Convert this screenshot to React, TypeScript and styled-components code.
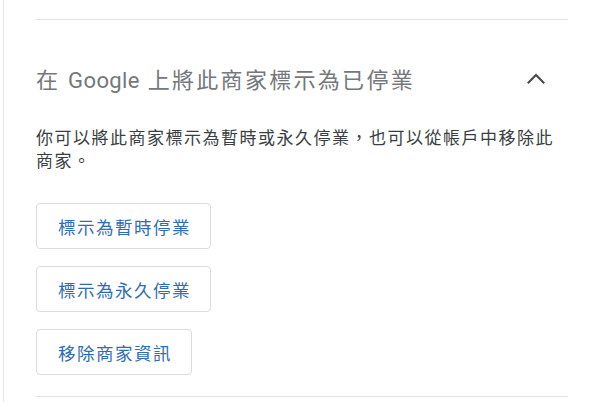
import React from 'react';
import styled, { createGlobalStyle } from 'styled-components';

// **** Style Section **** //

const GlobalStyle = createGlobalStyle`
  html, body {
    margin: 0;
    padding: 0;
    background: #ffffff;
  }
  body {
    font-family: Roboto, "Noto Sans CJK TC", "Noto Sans", sans-serif;
  }
`;

const Page = styled.div`
  min-height: 402px;
  margin-left: 3px;
  border-left: 1px solid #e6e6e6;
  padding: 19px 32px 0 32px;
  box-sizing: border-box;
`;

const Section = styled.section`
  border-top: 1px solid #e3e3e3;
  border-bottom: 1px solid #e3e3e3;
  padding-bottom: 21px;
`;

const Header = styled.div`
  display: flex;
  align-items: center;
  justify-content: space-between;
  height: 36px;
  margin-top: 40px;
`;

const Title = styled.h2`
  margin: 0;
  font-weight: 400;
  font-size: 22px;
  letter-spacing: 2.3px;
  color: #74777b;
  font-family: Roboto, "Noto Sans CJK TC", sans-serif;
`;

const Latin = styled.span`
  letter-spacing: 0.4px;
`;

const ToggleButton = styled.button`
  display: flex;
  align-items: center;
  justify-content: center;
  width: 28px;
  height: 28px;
  margin-right: 18px;
  padding: 0;
  border: none;
  background: none;
  color: #45484c;
  cursor: pointer;
`;

const Description = styled.p`
  margin: 31px 0 0;
  font-size: 17px;
  line-height: 23px;
  letter-spacing: 1.5px;
  color: #3a3d41;
`;

const Actions = styled.div`
  display: flex;
  flex-direction: column;
  align-items: flex-start;
  gap: 17px;
  margin-top: 30px;
`;

const ActionButton = styled.button`
  height: 46px;
  padding: 0 19px 0 21px;
  border: 1px solid #dadce0;
  border-radius: 4px;
  background: #ffffff;
  color: #2f6db3;
  font-family: "Noto Sans CJK TC", sans-serif;
  font-size: 17.5px;
  letter-spacing: 1.5px;
  cursor: pointer;
`;

// **** Component Function **** //

const ChevronUp = () => (
  <svg width="18" height="11" viewBox="0 0 18 11" fill="none">
    <polyline
      points="1.5,9.5 9,2 16.5,9.5"
      stroke="currentColor"
      strokeWidth="2"
      strokeLinecap="square"
    />
  </svg>
);

const actions = ['標示為暫時停業', '標示為永久停業', '移除商家資訊'];

const App = () => {
  return (
    <>
      <GlobalStyle />
      <Page>
        <Section>
          <Header>
            <Title>
              在 <Latin>Google</Latin> 上將此商家標示為已停業
            </Title>
            <ToggleButton type="button" aria-label="收合">
              <ChevronUp />
            </ToggleButton>
          </Header>
          <Description>
            你可以將此商家標示為暫時或永久停業，也可以從帳戶中移除此商家。
          </Description>
          <Actions>
            {actions.map(label => (
              <ActionButton key={label} type="button">
                {label}
              </ActionButton>
            ))}
          </Actions>
        </Section>
      </Page>
    </>
  );
};

export default App;
